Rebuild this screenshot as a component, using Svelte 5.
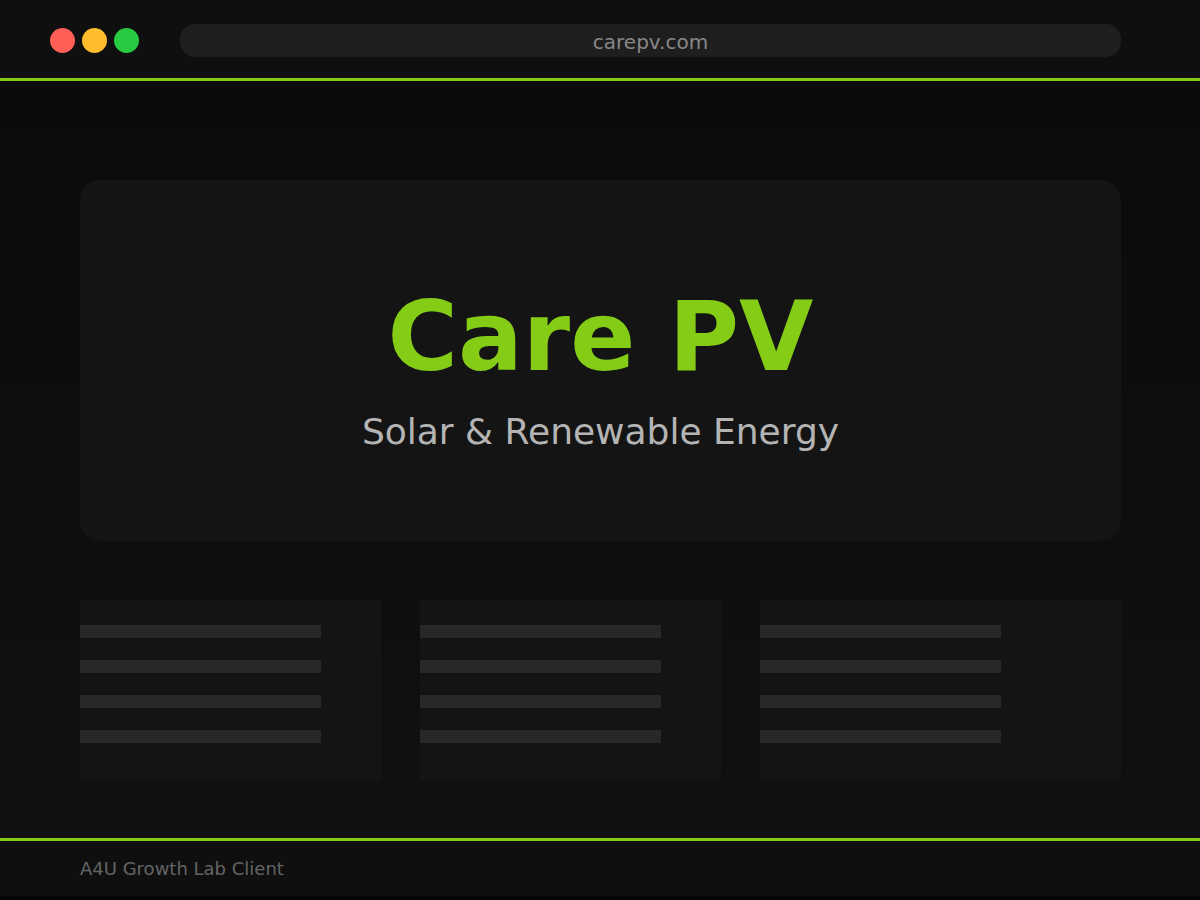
<script lang="ts">
	const lights = [
		{ label: "Close", color: "#ff5f57" },
		{ label: "Minimize", color: "#ffbd2e" },
		{ label: "Zoom", color: "#28ca42" },
	];

	const cards = [1, 2, 3];
	const lines = [1, 2, 3, 4];

	let url = $state("carepv.com");
</script>

<div class="window">
	<header class="toolbar">
		<div class="lights">
			{#each lights as light (light.label)}
				<button
					type="button"
					class="light"
					aria-label={light.label}
					style="background: {light.color}"
				></button>
			{/each}
		</div>
		<input class="address" type="text" aria-label="Address" bind:value={url} />
	</header>

	<main class="page">
		<section class="hero">
			<h1>Care PV</h1>
			<p>Solar &amp; Renewable Energy</p>
		</section>

		<section class="cards">
			{#each cards as card (card)}
				<div class="card">
					{#each lines as line (line)}
						<span class="line"></span>
					{/each}
				</div>
			{/each}
		</section>
	</main>

	<footer class="footer">A4U Growth Lab Client</footer>
</div>

<style>
	:global(body) {
		margin: 0;
		background: #000;
	}

	.window {
		--accent: #84cc16;
		--bar: #0f0f0f;
		--panel: #141414;
		box-sizing: border-box;
		min-height: 100vh;
		display: flex;
		flex-direction: column;
		background: linear-gradient(#0a0a0a, #111111);
		border-bottom: 4px solid #050505;
		font-family: "DejaVu Sans", sans-serif;
	}

	.toolbar {
		display: flex;
		align-items: center;
		gap: 41px;
		padding: 24px 79px 21px 50px;
		background: var(--bar);
		border-bottom: 3px solid var(--accent);
	}

	.lights {
		display: flex;
		gap: 7px;
	}

	.light {
		width: 25px;
		height: 25px;
		padding: 0;
		border: none;
		border-radius: 50%;
	}

	.address {
		flex: 1;
		min-width: 0;
		box-sizing: border-box;
		height: 33px;
		padding: 3px 16px 0;
		border: none;
		border-radius: 15px;
		background: #1e1e1e;
		color: #888888;
		font-family: inherit;
		font-size: 20px;
		text-align: center;
		outline: none;
	}

	.page {
		flex: 1;
		display: flex;
		flex-direction: column;
		gap: 59px;
		padding: 99px 79px 57px 80px;
	}

	.hero {
		flex: 1;
		display: flex;
		flex-direction: column;
		align-items: center;
		justify-content: center;
		gap: 18px;
		padding-top: 12px;
		border-radius: 20px;
		background: var(--panel);
		text-align: center;
	}

	h1 {
		margin: 0;
		color: var(--accent);
		font-size: 96px;
		line-height: 112px;
		font-weight: 700;
	}

	p {
		margin: 0;
		color: #b4b4b4;
		font-size: 36px;
		line-height: 42px;
	}

	.cards {
		display: grid;
		grid-template-columns: 5fr 5fr 6fr;
		gap: 39px;
	}

	.card {
		display: flex;
		flex-direction: column;
		gap: 22px;
		padding: 25px 0 38px;
		background: var(--panel);
	}

	.line {
		width: 100%;
		max-width: 241px;
		height: 13px;
		background: #282828;
	}

	.footer {
		padding: 16px 80px 15px;
		border-top: 3px solid var(--accent);
		background: var(--bar);
		color: #646464;
		font-size: 18px;
		line-height: 24px;
	}
</style>
